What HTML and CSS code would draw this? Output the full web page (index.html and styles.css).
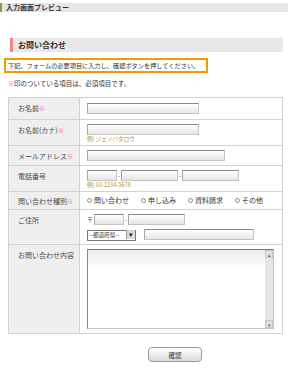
FILE: index.html
```html
<!DOCTYPE html>
<html lang="ja">
  <head>
    <meta charset="utf-8">
    <title>入力画面プレビュー</title>
    <link rel="stylesheet" href="styles.css">
  </head>
  <body>
    <div class="previewBar">入力画面プレビュー</div>

    <main class="page">
      <h2 class="formTitle">お問い合わせ</h2>

      <p class="lead">下記、フォームの必要項目に入力し、確認ボタンを押してください。</p>
      <p class="note"><span class="req">※</span>印のついている項目は、必須項目です。</p>

      <table class="formTable">
        <tr class="rowName">
          <th>お名前<span class="req">※</span></th>
          <td><input class="txt w112" type="text"></td>
        </tr>
        <tr class="rowEx">
          <th>お名前(カナ)<span class="req">※</span></th>
          <td>
            <input class="txt w112" type="text">
            <div class="example">例) ジェノバタロウ</div>
          </td>
        </tr>
        <tr>
          <th>メールアドレス<span class="req">※</span></th>
          <td><input class="txt w138" type="text"></td>
        </tr>
        <tr class="rowEx">
          <th>電話番号</th>
          <td>
            <div class="line">
              <input class="txt w30" type="text"><span class="dash">-</span><input class="txt w57" type="text"><span class="dash">-</span><input class="txt w57" type="text">
            </div>
            <div class="example">例) 03-1234-5678</div>
          </td>
        </tr>
        <tr class="rowRadio">
          <th>問い合わせ種別<span class="req">※</span></th>
          <td>
            <div class="radios">
              <label><input type="radio" name="kind">問い合わせ</label>
              <label><input type="radio" name="kind">申し込み</label>
              <label><input type="radio" name="kind">資料請求</label>
              <label><input type="radio" name="kind">その他</label>
            </div>
          </td>
        </tr>
        <tr>
          <th>ご住所</th>
          <td>
            <div class="line">
              <span class="zip">〒</span><input class="txt w30" type="text"><span class="dash">-</span><input class="txt w57" type="text">
            </div>
            <div class="line second">
              <span class="selectBox">
                <select>
                  <option>--都道府県--</option>
                </select>
              </span>
              <input class="txt w110" type="text">
            </div>
          </td>
        </tr>
        <tr>
          <th>お問い合わせ内容</th>
          <td>
            <div class="areaWrap">
              <textarea rows="1" cols="1"></textarea>
              <div class="scrollbar">
                <span class="sbBtn">&#9652;</span>
                <span class="sbTrack"></span>
                <span class="sbBtn">&#9662;</span>
              </div>
            </div>
          </td>
        </tr>
      </table>

      <div class="buttons">
        <button class="confirm" type="button">確認</button>
      </div>
    </main>
  </body>
</html>
```

FILE: styles.css
```css
body {
  margin: 0;
  background: #ffffff;
  color: #333333;
  font-family: "Noto Sans CJK JP", "Noto Sans", sans-serif;
  font-size: 7px;
  width: 291px;
}

.previewBar {
  margin: 3px 3px 0 0;
  height: 9px;
  line-height: 9px;
  padding-left: 4px;
  border-left: 2px solid #8c9a3c;
  background: #e6e6e6;
  font-weight: bold;
  color: #333333;
}

.formTitle {
  margin: 26px 8px 0 10px;
  height: 14px;
  line-height: 14px;
  padding-left: 5px;
  border-left: 3px solid #ee8a8a;
  background: #e8e8e8;
  font-size: 8px;
  color: #333333;
}

.lead {
  margin: 6px 0 0 4px;
  width: 196px;
  height: 11px;
  line-height: 11px;
  padding: 0 2px;
  border: 2px solid #f59a00;
  font-size: 6.2px;
  color: #333333;
  white-space: nowrap;
}

.note {
  margin: 5px 0 0 8px;
  line-height: 10px;
  font-size: 6.5px;
}

.req {
  color: #ee6d86;
  font-size: 6px;
}

.formTable {
  margin: 8px 0 0 8px;
  width: 275px;
  border-collapse: collapse;
  border: 1px solid #cccccc;
}

.formTable th,
.formTable td {
  border: 1px solid #d2d2d2;
}

.formTable th {
  width: 63px;
  padding: 6px 0 0 9px;
  vertical-align: top;
  text-align: left;
  font-weight: normal;
  line-height: 9px;
  background: #efefef;
  color: #4a4a4a;
  white-space: nowrap;
}

.formTable td {
  padding: 4px 7px;
  vertical-align: top;
}

.formTable .rowName td {
  padding: 5px 7px;
}

.formTable .rowEx td {
  padding-bottom: 2px;
}

.formTable .rowRadio td {
  padding-top: 3px;
}

.formTable .rowRadio th {
  padding-top: 5px;
}

.txt {
  display: block;
  box-sizing: border-box;
  height: 11px;
  margin: 0;
  padding: 0;
  border: 1px solid #c4c4c4;
  border-top-color: #8a8a8a;
  border-left-color: #a8a8a8;
  background: linear-gradient(#ffffff, #e6e6e6);
}

.w30 { width: 30px; }
.w57 { width: 57px; }
.w110 { width: 110px; }
.w112 { width: 112px; }
.w138 { width: 138px; }

.line {
  display: flex;
  align-items: center;
}

.line.second {
  margin-top: 4px;
  gap: 8px;
}

.dash {
  width: 4px;
  text-align: center;
  font-size: 6px;
  line-height: 11px;
}

.zip {
  width: 7px;
  font-size: 6px;
}

.example {
  height: 8px;
  line-height: 8px;
  font-size: 5.6px;
  color: #b8902a;
}

.radios {
  display: flex;
  align-items: center;
  height: 10px;
}

.radios label {
  display: flex;
  align-items: center;
  margin-right: 12px;
  white-space: nowrap;
}

.radios input {
  appearance: none;
  box-sizing: border-box;
  width: 5px;
  height: 5px;
  margin: 0 2px 0 0;
  border: 1px solid #8a8a8a;
  border-radius: 50%;
  background: #ffffff;
}

.selectBox {
  position: relative;
  display: block;
  width: 49px;
  height: 11px;
}

.selectBox select {
  appearance: none;
  box-sizing: border-box;
  width: 49px;
  height: 11px;
  margin: 0;
  padding: 0 0 0 1px;
  border: 1px solid #777777;
  background: #ffffff;
  font-family: "Noto Sans CJK JP", sans-serif;
  font-size: 5.6px;
  line-height: 9px;
  color: #333333;
}

.selectBox::after {
  content: "\25BE";
  position: absolute;
  right: 1px;
  top: 1px;
  width: 8px;
  height: 9px;
  line-height: 9px;
  text-align: center;
  font-size: 7px;
  background: #d8d8d8;
  border-left: 1px solid #9a9a9a;
  color: #222222;
}

.areaWrap {
  display: flex;
  box-sizing: border-box;
  width: 187px;
  height: 80px;
  border: 1px solid #c4c4c4;
  border-top-color: #777777;
  border-left-color: #8a8a8a;
  background: linear-gradient(#ececec, #ffffff 25%);
}

.areaWrap textarea {
  flex: 1;
  min-width: 0;
  min-height: 0;
  margin: 0;
  border: 0;
  padding: 0;
  font-size: 7px;
  background: transparent;
  resize: none;
}

.scrollbar {
  display: flex;
  flex-direction: column;
  width: 8px;
  background: #e6e6e6;
}

.sbBtn {
  height: 8px;
  line-height: 8px;
  text-align: center;
  font-size: 5px;
  color: #666666;
  background: #e0e0e0;
  border: 1px solid #c8c8c8;
  box-sizing: border-box;
}

.sbTrack {
  flex: 1;
}

.buttons {
  padding: 13px 0 0 148px;
}

.confirm {
  display: block;
  width: 54px;
  height: 15px;
  margin: 0;
  padding: 0;
  border: 1px solid #9a9a9a;
  border-radius: 4px;
  background: linear-gradient(#ffffff, #dcdcdc);
  font-family: "Noto Sans CJK JP", sans-serif;
  font-size: 6.5px;
  color: #333333;
}
```
